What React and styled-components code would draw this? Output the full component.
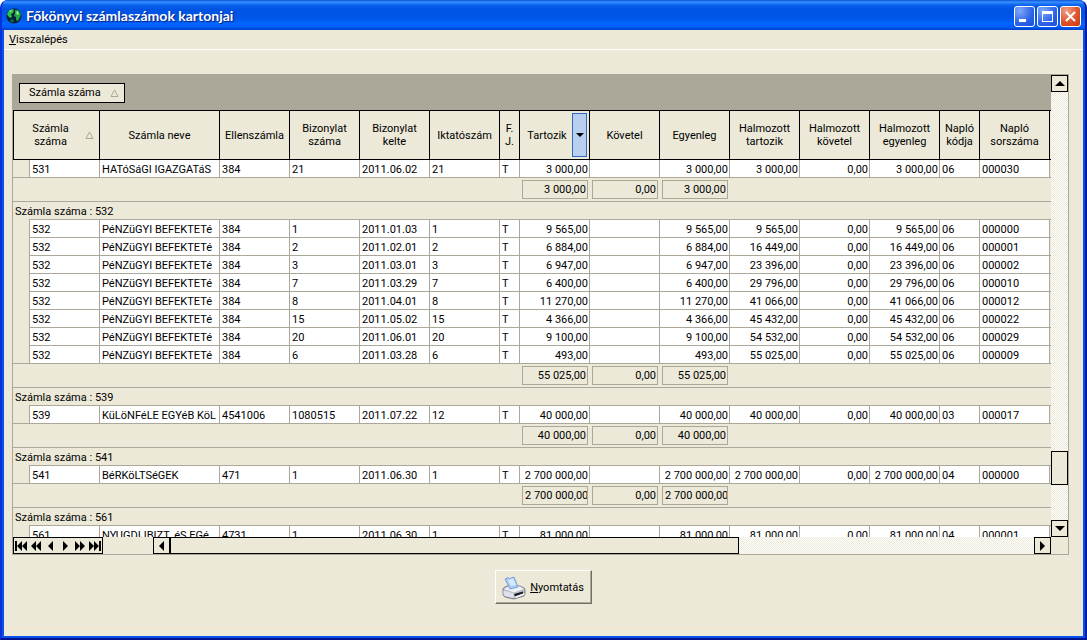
import React from 'react';
import styled, { createGlobalStyle } from 'styled-components';

const face = '#ece9d8';
const shade = '#aca899';

const GlobalStyle = createGlobalStyle`
    * {
        box-sizing: border-box;
    }
    body {
        margin: 0;
        background: #fff;
        color: #000;
        font-family: Roboto, 'Liberation Sans', sans-serif;
        font-size: 11px;
        line-height: 14px;
    }
    button {
        font: inherit;
        color: inherit;
        padding: 0;
        border: 0;
    }
`;

const Win = {
    frame: styled.div`
        display: flex;
        flex-direction: column;
        min-height: 100vh;
        padding: 0 2px 2px;
        background: #0a50ec;
        border: 2px solid #0831d9;
        border-right-color: #001ea0;
        border-bottom-color: #00138c;
        border-top: 0;
        border-radius: 8px 8px 0 0;
        overflow: hidden;
    `,
    titleBar: styled.header`
        display: flex;
        align-items: center;
        gap: 4px;
        height: 30px;
        margin: 0 -2px;
        padding: 2px 4px 0;
        background: linear-gradient(#0a55d8 0, #3a90ff 2px, #0a63ee 5px, #0054e3 9px, #0056e8 18px, #0066ff 24px, #005cf4 27px, #0040c8 30px);
    `,
    title: styled.h1`
        flex: 1;
        margin: 0;
        color: #fff;
        font-family: Lato, 'Open Sans', sans-serif;
        font-size: 14px;
        font-weight: 700;
        line-height: 18px;
        text-shadow: 1px 1px 1px #0a1f80;
    `,
    controls: styled.div`
        display: flex;
        gap: 2px;
    `,
    control: styled.button`
        width: 21px;
        height: 21px;
        border: 1px solid #fff;
        border-radius: 3px;
        background: ${props => props.$close
            ? 'radial-gradient(circle at 30% 20%, #f0a088, #e0532c 55%, #c83a10)'
            : 'radial-gradient(circle at 25% 20%, #80a8f8, #2c62e8 60%, #1a50d8)'};
        svg {
            display: block;
            margin: auto;
        }
    `,
    menu: styled.nav`
        height: 20px;
        padding: 3px 5px 2px;
        background: ${face};
        border-bottom: 1px solid #fff;
        a {
            color: #000;
            text-decoration: none;
        }
    `,
    content: styled.main`
        flex: 1;
        display: flex;
        flex-direction: column;
        align-items: center;
        gap: 15px;
        padding: 24px 8px;
        background: ${face};
    `,
    bottomEdge: styled.footer`
        height: 8px;
        background: ${face};
        border-top: 1px solid #f8e2c8;
    `,
};

const Grid = {
    frame: styled.section`
        display: grid;
        grid-template-columns: minmax(0, 1fr) 17px;
        align-self: stretch;
        margin-right: 6px;
        border: 1px solid ${shade};
    `,
    view: styled.div`
        height: 462px;
        overflow: hidden;
    `,
    groupPanel: styled.div`
        height: 35px;
        padding: 8px 6px;
        background: ${shade};
    `,
    groupButton: styled.button`
        display: flex;
        align-items: center;
        justify-content: space-between;
        width: 106px;
        height: 20px;
        padding: 0 5px 0 9px;
        border: 1px solid #000;
        background: ${face};
        white-space: nowrap;
    `,
    table: styled.table`
        width: 100%;
        table-layout: fixed;
        border-collapse: separate;
        border-spacing: 0;
    `,
    head: styled.th`
        height: 50px;
        padding: 0 2px;
        border: 1px solid #000;
        border-left-width: ${props => props.$first ? '1px' : 0};
        font-weight: 400;
        line-height: 13px;
    `,
    headInner: styled.div`
        display: flex;
        align-items: center;
        justify-content: space-between;
        height: 48px;
        padding-right: ${props => props.$sorted ? '3px' : 0};
    `,
    headLabel: styled.span`
        flex: 1;
        white-space: pre-line;
    `,
    filter: styled.button`
        display: flex;
        align-items: center;
        justify-content: center;
        width: 15px;
        height: 44px;
        border: 1px solid #316ac5;
        background: #b9cff0;
    `,
    headEnd: styled.td`
        padding: 0;
        border: 1px solid #000;
        border-width: 1px 0;
    `,
    cell: styled.td`
        height: 18px;
        padding: 2px 1px 0 2px;
        border: 0 solid ${shade};
        border-right-width: 1px;
        border-bottom-width: 1px;
        border-left-width: ${props => props.$first ? '1px' : 0};
        background: #fff;
        text-align: ${props => props.$num ? 'right' : 'left'};
        white-space: nowrap;
        overflow: hidden;
    `,
    indicator: styled.td`
        padding: 0;
        border-bottom: ${props => props.$last ? `1px solid ${shade}` : 0};
    `,
    rowEnd: styled.td`
        padding: 0;
        border-bottom: 1px solid ${shade};
    `,
    groupIndent: styled.th`
        height: 18px;
        padding: 2px 0 0 2px;
        font-weight: 400;
        text-align: left;
        white-space: nowrap;
        overflow: visible;
    `,
    groupLine: styled.td`
        padding: 0;
        border-bottom: 1px solid ${shade};
    `,
    sumCell: styled.td`
        height: 24px;
        padding: 0 2px;
        border-bottom: 1px solid ${shade};
    `,
    sumBox: styled.div`
        height: 19px;
        padding: 2px 1px 0 2px;
        border: 1px solid ${shade};
        text-align: right;
        white-space: nowrap;
        overflow: hidden;
    `,
};

const checker = 'repeating-conic-gradient(#fff 0 25%, #ece9d8 0 50%) 0 0 / 2px 2px';

const Bar = {
    vertical: styled.div`
        display: flex;
        flex-direction: column;
        background: ${checker};
    `,
    bottom: styled.div`
        display: flex;
        height: 17px;
    `,
    navigator: styled.div`
        display: flex;
        width: 90px;
        margin-right: 50px;
        border: 1px solid #000;
    `,
    navButton: styled.button`
        display: flex;
        flex: 1;
        align-items: center;
        justify-content: center;
        background: ${face};
    `,
    horizontal: styled.div`
        display: flex;
        flex: 1;
        background: ${checker};
    `,
    arrow: styled.button`
        display: flex;
        align-items: center;
        justify-content: center;
        width: 17px;
        height: 17px;
        border: 1px solid #000;
        background: ${face};
    `,
    track: styled.div`
        display: flex;
        flex: 1;
        flex-direction: ${props => props.$vertical ? 'column' : 'row'};
    `,
    space: styled.div`
        flex: ${props => props.$grow};
    `,
    thumb: styled.div`
        flex: ${props => props.$grow};
        border: 1px solid #000;
        background: ${face};
    `,
};

const PrintButton = styled.button`
    display: flex;
    align-items: center;
    gap: 4px;
    height: 34px;
    padding: 1px 7px 0 6px;
    border: 1px solid;
    border-color: #fff #716f64 #716f64 #fff;
    background: ${face};
    box-shadow: inset -1px -1px 0 ${shade};
`;

const columns = [
    { label: 'Számla\nszáma', width: 71, sorted: true },
    { label: 'Számla neve', width: 120 },
    { label: 'Ellenszámla', width: 70 },
    { label: 'Bizonylat\nszáma', width: 70 },
    { label: 'Bizonylat\nkelte', width: 70 },
    { label: 'Iktatószám', width: 70 },
    { label: 'F.\nJ.', width: 20 },
    { label: 'Tartozik', width: 70, num: true, filter: true },
    { label: 'Követel', width: 70, num: true },
    { label: 'Egyenleg', width: 70, num: true },
    { label: 'Halmozott\ntartozik', width: 70, num: true },
    { label: 'Halmozott\nkövetel', width: 70, num: true },
    { label: 'Halmozott\negyenleg', width: 70, num: true },
    { label: 'Napló\nkódja', width: 40 },
    { label: 'Napló\nsorszáma', width: 70 },
];

const line = (account, name, contra, doc, date, reg, debit, total, code, serial) =>
    [account, name, contra, doc, date, reg, 'T', debit, '', debit, total, '0,00', total, code, serial];

const penz = 'PéNZüGYI BEFEKTETé';

const groups = [
    {
        id: '531', scrolled: true, sum: '3 000,00',
        rows: [line('531', 'HATóSáGI IGAZGATáS', '384', '21', '2011.06.02', '21', '3 000,00', '3 000,00', '06', '000030')],
    },
    {
        id: '532', sum: '55 025,00',
        rows: [
            line('532', penz, '384', '1', '2011.01.03', '1', '9 565,00', '9 565,00', '06', '000000'),
            line('532', penz, '384', '2', '2011.02.01', '2', '6 884,00', '16 449,00', '06', '000001'),
            line('532', penz, '384', '3', '2011.03.01', '3', '6 947,00', '23 396,00', '06', '000002'),
            line('532', penz, '384', '7', '2011.03.29', '7', '6 400,00', '29 796,00', '06', '000010'),
            line('532', penz, '384', '8', '2011.04.01', '8', '11 270,00', '41 066,00', '06', '000012'),
            line('532', penz, '384', '15', '2011.05.02', '15', '4 366,00', '45 432,00', '06', '000022'),
            line('532', penz, '384', '20', '2011.06.01', '20', '9 100,00', '54 532,00', '06', '000029'),
            line('532', penz, '384', '6', '2011.03.28', '6', '493,00', '55 025,00', '06', '000009'),
        ],
    },
    {
        id: '539', sum: '40 000,00',
        rows: [line('539', 'KüLöNFéLE EGYéB KöL', '4541006', '1080515', '2011.07.22', '12', '40 000,00', '40 000,00', '03', '000017')],
    },
    {
        id: '541', sum: '2 700 000,00',
        rows: [line('541', 'BéRKöLTSéGEK', '471', '1', '2011.06.30', '1', '2 700 000,00', '2 700 000,00', '04', '000000')],
    },
    {
        id: '561', sum: '81 000,00',
        rows: [line('561', 'NYUGDIJBIZT. éS EGé', '4731', '1', '2011.06.30', '1', '81 000,00', '81 000,00', '04', '000001')],
    },
];

const arrows = {
    up: 'M0 5h10L5 0z',
    down: 'M0 0h10L5 5z',
    left: 'M5 0v10L0 5z',
    right: 'M0 0v10l5-5z',
};

function Arrow({ dir }) {
    const side = dir === 'left' || dir === 'right';
    return <svg width={side ? 5 : 10} height={side ? 10 : 5} aria-hidden="true"><path d={arrows[dir]} /></svg>;
}

const navIcons = [
    ['Első', 'M0 0h2v10H0z M7 0v10L2 5z M12 0v10L7 5z'],
    ['Előző oldal', 'M6 0v10L1 5z M11 0v10L6 5z'],
    ['Előző', 'M8 0v10L3 5z'],
    ['Következő', 'M4 0v10l5-5z'],
    ['Következő oldal', 'M1 0v10l5-5z M6 0v10l5-5z'],
    ['Utolsó', 'M0 0v10l5-5z M5 0v10l5-5z M10 0h2v10h-2z'],
];

function SortMark() {
    return (
        <svg width="9" height="9" aria-hidden="true">
            <path d="M1 7.500L4.500 1L8 7.500z" fill="none" stroke={shade} />
        </svg>
    );
}

function Globe() {
    return (
        <svg width="16" height="16" viewBox="0 0 16 16" aria-hidden="true">
            <circle cx="8" cy="8" r="7.500" fill="#06203c" />
            <path d="M1 6L3 2.500L6 1L8 2L7 5L5 6L6 9L4 10L2 8z" fill="#2fc04c" />
            <path d="M9 2L12 2L15 6L14 9L12 13L10 12L10 9L8 8L9 5z" fill="#22a840" />
            <path d="M3 3L6 2L5 4zM10 4L12 3L13 6L11 7z" fill="#8af09a" />
            <path d="M4 12L7 11L8 14L5 14z" fill="#14702c" />
        </svg>
    );
}

function Printer() {
    return (
        <svg width="24" height="24" viewBox="0 0 24 24" aria-hidden="true">
            <path d="M1 13Q1 12 3 11L7 9.500L18 10L22 12Q23 13 23 15L23 18L22 20L12 23L3 21L1 19z" fill="#b9bdc9" stroke="#666a76" strokeWidth=".8" />
            <path d="M2 13L7 10L18 10.500L22 13L12 16.500z" fill="#eef0f5" />
            <path d="M1.500 14.500L11.500 17.500L11.500 22L3 20L1.500 18.500z" fill="#dfe2ea" />
            <path d="M3 3L6 1.500L7.500 2.500L12 1L16 11L8 13z" fill="#a9cbf8" stroke="#6b92cc" strokeWidth=".8" />
            <path d="M6 4L11 2.500L14 9L9 10z" fill="#d8e8ff" />
            <path d="M12 18L21 15.500L21 17.500L13 20.500z" fill="#1d1f24" />
            <path d="M13 20.500L21.500 17.500L23 18.500L14 22z" fill="#f4f5f8" />
        </svg>
    );
}

function HeadRow() {
    return (
        <tr>
            {columns.map((col, index) => (
                <Grid.head key={col.label} scope="col" colSpan={index === 0 ? 2 : 1} $first={index === 0}>
                    {col.sorted || col.filter ? (
                        <Grid.headInner $sorted={col.sorted}>
                            <Grid.headLabel>{col.label}</Grid.headLabel>
                            {col.sorted && <SortMark />}
                            {col.filter && <Grid.filter aria-label="Szűrés"><svg width="8" height="4"><path d="M0 0h8L4 4z" /></svg></Grid.filter>}
                        </Grid.headInner>
                    ) : <Grid.headLabel>{col.label}</Grid.headLabel>}
                </Grid.head>
            ))}
            <Grid.headEnd />
        </tr>
    );
}

function Group({ group }) {
    return (
        <tbody>
            {!group.scrolled && (
                <tr>
                    <Grid.groupIndent scope="rowgroup">Számla száma : {group.id}</Grid.groupIndent>
                    <Grid.groupLine colSpan={columns.length + 1} />
                </tr>
            )}
            {group.rows.map((row, r) => (
                <tr key={r}>
                    <Grid.indicator $last={r === group.rows.length - 1} />
                    {row.map((value, c) => (
                        <Grid.cell key={c} $first={c === 0} $num={columns[c].num}>{value}</Grid.cell>
                    ))}
                    <Grid.rowEnd />
                </tr>
            ))}
            <tr>
                <Grid.sumCell colSpan={8} />
                {[group.sum, '0,00', group.sum].map((value, i) => (
                    <Grid.sumCell key={i}><Grid.sumBox>{value}</Grid.sumBox></Grid.sumCell>
                ))}
                <Grid.sumCell colSpan={6} />
            </tr>
        </tbody>
    );
}

function App() {
    return (
        <Win.frame>
            <GlobalStyle />
            <Win.titleBar>
                <Globe />
                <Win.title>Főkönyvi számlaszámok kartonjai</Win.title>
                <Win.controls>
                    <Win.control aria-label="Kis méret">
                        <svg width="19" height="19"><path d="M4 12h7v3H4z" fill="#fff" /></svg>
                    </Win.control>
                    <Win.control aria-label="Teljes méret">
                        <svg width="19" height="19"><path d="M4 4h11v11H4zM5 7v7h9V7z" fill="#fff" fillRule="evenodd" /></svg>
                    </Win.control>
                    <Win.control aria-label="Bezárás" $close>
                        <svg width="19" height="19"><path d="M5 5l9 9M14 5l-9 9" stroke="#fff" strokeWidth="2" /></svg>
                    </Win.control>
                </Win.controls>
            </Win.titleBar>
            <Win.menu><a href="#back"><u>V</u>isszalépés</a></Win.menu>
            <Win.content>
                <Grid.frame>
                    <Grid.view>
                        <Grid.groupPanel>
                            <Grid.groupButton>Számla száma <SortMark /></Grid.groupButton>
                        </Grid.groupPanel>
                        <Grid.table>
                            <colgroup>
                                <col width="16" />
                                {columns.map(col => <col key={col.label} width={col.width} />)}
                                <col />
                            </colgroup>
                            <thead><HeadRow /></thead>
                            {groups.map(group => <Group key={group.id} group={group} />)}
                        </Grid.table>
                    </Grid.view>
                    <Bar.vertical>
                        <Bar.arrow aria-label="Fel"><Arrow dir="up" /></Bar.arrow>
                        <Bar.track $vertical>
                            <Bar.space $grow={361} />
                            <Bar.thumb $grow={32} />
                            <Bar.space $grow={35} />
                        </Bar.track>
                        <Bar.arrow aria-label="Le"><Arrow dir="down" /></Bar.arrow>
                    </Bar.vertical>
                    <Bar.bottom>
                        <Bar.navigator>
                            {navIcons.map(([label, d]) => (
                                <Bar.navButton key={label} aria-label={label}>
                                    <svg width="12" height="10"><path d={d} /></svg>
                                </Bar.navButton>
                            ))}
                        </Bar.navigator>
                        <Bar.horizontal>
                            <Bar.arrow aria-label="Balra"><Arrow dir="left" /></Bar.arrow>
                            <Bar.track>
                                <Bar.thumb $grow={568} />
                                <Bar.space $grow={296} />
                            </Bar.track>
                            <Bar.arrow aria-label="Jobbra"><Arrow dir="right" /></Bar.arrow>
                        </Bar.horizontal>
                    </Bar.bottom>
                </Grid.frame>
                <PrintButton><Printer /><span><u>N</u>yomtatás</span></PrintButton>
            </Win.content>
            <Win.bottomEdge />
        </Win.frame>
    );
}

export default App;
